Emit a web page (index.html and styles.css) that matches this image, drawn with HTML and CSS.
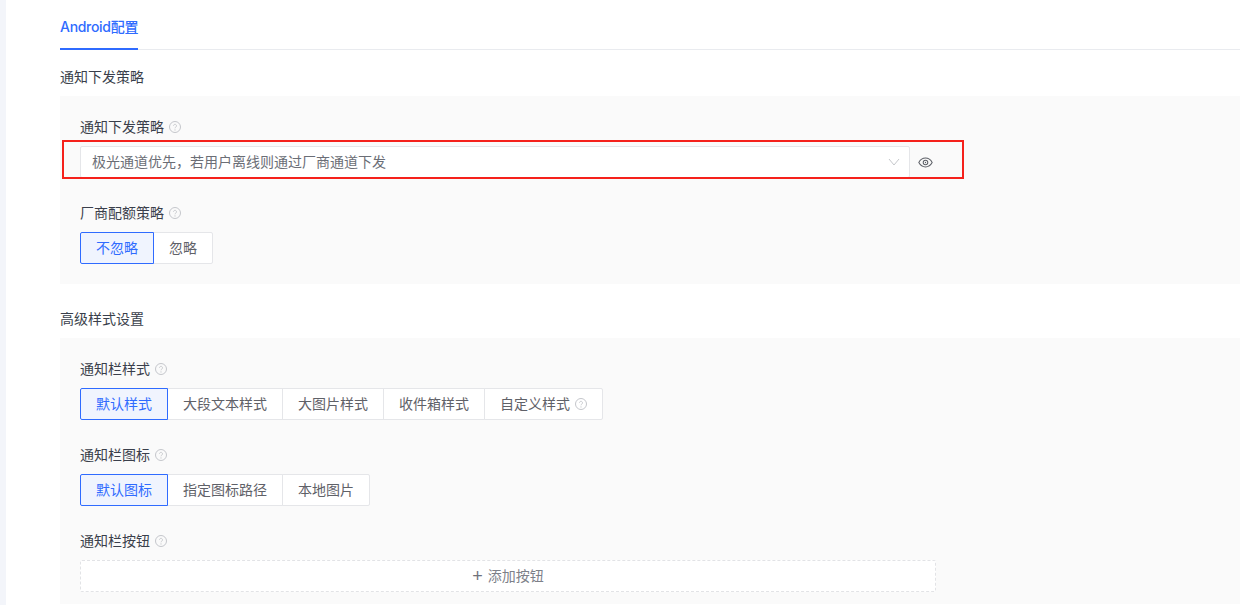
FILE: index.html
```html
<!DOCTYPE html>
<html lang="zh">
<head>
<meta charset="utf-8">
<title>Android配置</title>
<link rel="stylesheet" href="styles.css">
</head>
<body>
<svg class="sprite" width="0" height="0" aria-hidden="true">
  <symbol id="help" viewBox="0 0 12 12">
    <circle cx="6" cy="6" r="5.5" fill="none" stroke="currentColor" stroke-width="1"/>
    <path d="M4.5 4.8a1.500 1.500 0 1 1 2.400 1.200c-.6.4-.9.7-.9 1.300" fill="none" stroke="currentColor" stroke-width="0.9"/>
    <circle cx="6" cy="8.900" r="0.600" fill="currentColor"/>
  </symbol>
</svg>
<div class="strip"></div>
<main class="main">
  <nav class="tabs"><a class="tab">Android配置</a></nav>

  <h2 class="section-title">通知下发策略</h2>
  <section class="panel">
    <div class="field">
      <div class="label">通知下发策略 <svg class="help"><use href="#help"/></svg></div>
      <div class="select-row">
        <div class="select">
          <span>极光通道优先，若用户离线则通过厂商通道下发</span>
          <svg class="chevron" viewBox="0 0 12 8"><path d="M1 1l5 6 5-6" fill="none" stroke="currentColor"/></svg>
        </div>
        <svg class="eye" viewBox="0 0 16 12">
          <path d="M.7 6C2.4 2.900 5 1.200 8 1.200S13.600 2.900 15.300 6C13.600 9.100 11 10.800 8 10.800S2.400 9.100.7 6z" fill="none" stroke="currentColor" stroke-width="1.100"/>
          <circle cx="8" cy="6" r="2.500" fill="none" stroke="currentColor" stroke-width="1.100"/>
          <circle cx="8" cy="6" r="0.700" fill="currentColor"/>
        </svg>
      </div>
    </div>
    <div class="field">
      <div class="label">厂商配额策略 <svg class="help"><use href="#help"/></svg></div>
      <div class="radio-group">
        <span class="radio active">不忽略</span><span class="radio">忽略</span>
      </div>
    </div>
  </section>

  <h2 class="section-title">高级样式设置</h2>
  <section class="panel panel-last">
    <div class="field">
      <div class="label">通知栏样式 <svg class="help"><use href="#help"/></svg></div>
      <div class="radio-group">
        <span class="radio active">默认样式</span><span class="radio">大段文本样式</span><span class="radio">大图片样式</span><span class="radio">收件箱样式</span><span class="radio">自定义样式 <svg class="help"><use href="#help"/></svg></span>
      </div>
    </div>
    <div class="field">
      <div class="label">通知栏图标 <svg class="help"><use href="#help"/></svg></div>
      <div class="radio-group">
        <span class="radio active">默认图标</span><span class="radio">指定图标路径</span><span class="radio">本地图片</span>
      </div>
    </div>
    <div class="field">
      <div class="label">通知栏按钮 <svg class="help"><use href="#help"/></svg></div>
      <div class="add-btn"><span class="plus">+</span> 添加按钮</div>
    </div>
  </section>
</main>
<div class="annotation"></div>
</body>
</html>
```

FILE: styles.css
```css
* { box-sizing: border-box; }
html, body { margin: 0; height: 605px; overflow: hidden; background: #fff; }
body {
  display: flex;
  font-family: "Liberation Sans", "Noto Sans CJK SC", sans-serif;
  font-size: 14px;
  line-height: 22px;
  color: #3a3f4b;
}
.sprite { position: absolute; }
.strip { width: 6px; flex: none; background: #f3f5fa; }
.main { flex: 1; min-width: 0; padding-left: 54px; }

.tabs { height: 50px; border-bottom: 1px solid #e9ebef; display: flex; }
.tab {
  width: 78px;
  height: 50px;
  padding-top: 16px;
  font-family: "Inter", "Noto Sans CJK SC", sans-serif;
  font-weight: 500;
  letter-spacing: -0.3px;
  white-space: nowrap;
  color: #2f6bff;
  border-bottom: 2px solid #2f6bff;
}

.section-title {
  margin: 16px 0 8px;
  font-size: 14px;
  line-height: 22px;
  font-weight: 400;
  color: #3a3f4b;
}
.panel { background: #fafafa; padding: 20px; margin-bottom: 24px; }
.panel-last { margin-bottom: 0; padding-bottom: 12px; }
.field + .field { margin-top: 24px; }

.label { height: 22px; margin-bottom: 8px; display: flex; align-items: center; gap: 5px; color: #3a3f4b; }
.help { width: 12px; height: 12px; color: #c4c6cb; flex: none; }

.select-row { display: flex; align-items: center; width: 856px; }
.select {
  width: 830px;
  height: 32px;
  padding: 0 9px 0 11px;
  display: flex;
  align-items: center;
  justify-content: space-between;
  background: #fff;
  border: 1px solid #e5e6e9;
  border-radius: 2px;
  color: #6b6e76;
}
.chevron { width: 12px; height: 8px; color: #c6c8cc; }
.eye { width: 15px; height: 11px; margin-left: 8px; color: #5c5f66; }

.radio-group { display: flex; }
.radio {
  height: 32px;
  padding: 0 15px;
  display: inline-flex;
  align-items: center;
  gap: 5px;
  background: #fff;
  border: 1px solid #e5e6e9;
  margin-left: -1px;
  color: #5f6168;
}
.radio:first-child { margin-left: 0; border-radius: 2px 0 0 2px; }
.radio:last-child { border-radius: 0 2px 2px 0; }
.radio.active {
  position: relative;
  color: #2f6bff;
  background: #f0f4fe;
  border-color: #2f6bff;
}

.add-btn {
  width: 856px;
  height: 32px;
  display: flex;
  align-items: center;
  justify-content: center;
  gap: 5px;
  background: #fff;
  border: 1px dashed #e2e3e6;
  border-radius: 2px;
  color: #7d8089;
}
.plus { font-size: 18px; color: #6f727b; }

.annotation {
  position: absolute;
  left: 62px;
  top: 140px;
  width: 902px;
  height: 39px;
  border: 2px solid #f5211b;
  pointer-events: none;
}
```
